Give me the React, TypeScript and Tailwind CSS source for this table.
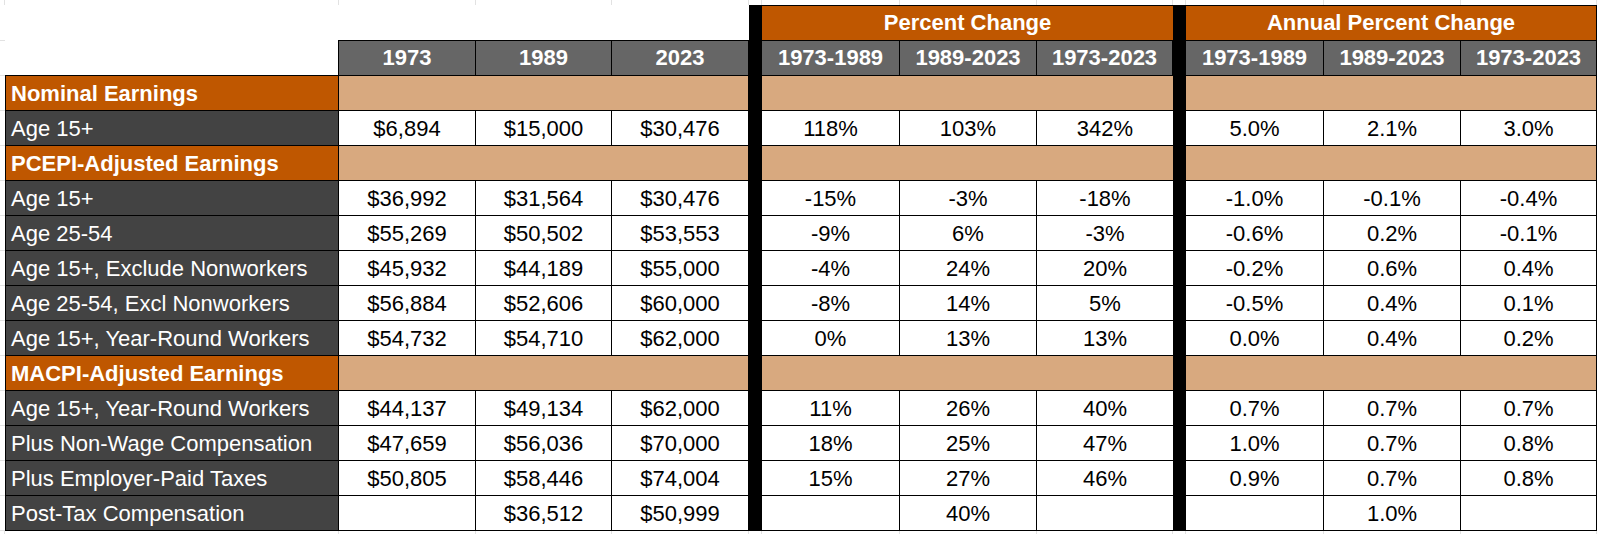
import React from "react";

type Row =
  | { kind: "section"; label: string }
  | { kind: "data"; label: string; vals: string[] };

const rows: Row[] = [
  { kind: "section", label: "Nominal Earnings" },
  { kind: "data", label: "Age 15+", vals: ["$6,894", "$15,000", "$30,476", "118%", "103%", "342%", "5.0%", "2.1%", "3.0%"] },
  { kind: "section", label: "PCEPI-Adjusted Earnings" },
  { kind: "data", label: "Age 15+", vals: ["$36,992", "$31,564", "$30,476", "-15%", "-3%", "-18%", "-1.0%", "-0.1%", "-0.4%"] },
  { kind: "data", label: "Age 25-54", vals: ["$55,269", "$50,502", "$53,553", "-9%", "6%", "-3%", "-0.6%", "0.2%", "-0.1%"] },
  { kind: "data", label: "Age 15+, Exclude Nonworkers", vals: ["$45,932", "$44,189", "$55,000", "-4%", "24%", "20%", "-0.2%", "0.6%", "0.4%"] },
  { kind: "data", label: "Age 25-54, Excl Nonworkers", vals: ["$56,884", "$52,606", "$60,000", "-8%", "14%", "5%", "-0.5%", "0.4%", "0.1%"] },
  { kind: "data", label: "Age 15+, Year-Round Workers", vals: ["$54,732", "$54,710", "$62,000", "0%", "13%", "13%", "0.0%", "0.4%", "0.2%"] },
  { kind: "section", label: "MACPI-Adjusted Earnings" },
  { kind: "data", label: "Age 15+, Year-Round Workers", vals: ["$44,137", "$49,134", "$62,000", "11%", "26%", "40%", "0.7%", "0.7%", "0.7%"] },
  { kind: "data", label: "Plus Non-Wage Compensation", vals: ["$47,659", "$56,036", "$70,000", "18%", "25%", "47%", "1.0%", "0.7%", "0.8%"] },
  { kind: "data", label: "Plus Employer-Paid Taxes", vals: ["$50,805", "$58,446", "$74,004", "15%", "27%", "46%", "0.9%", "0.7%", "0.8%"] },
  { kind: "data", label: "Post-Tax Compensation", vals: ["", "$36,512", "$50,999", "", "40%", "", "", "1.0%", ""] },
];

const years = ["1973", "1989", "2023"];
const spans = ["1973-1989", "1989-2023", "1973-2023"];

function MarginRow({ k }: { k: string }) {
  const cells = [];
  for (let i = 0; i < 14; i++) {
    cells.push(
      <div
        key={`${k}-${i}`}
        className={i < 13 ? "border-r border-[#e2e2e2]" : ""}
      />
    );
  }
  return <>{cells}</>;
}

export default function App() {
  const cells: React.ReactNode[] = [];

  cells.push(<MarginRow key="top" k="top" />);

  cells.push(<div key="r1-m" />);
  cells.push(<div key="r1-blank" className="col-span-4 bg-white" />);
  cells.push(
    <div
      key="r1-pc"
      className="col-span-3 bg-[#bf5700] border-t border-black text-white font-bold flex items-center justify-center"
    >
      Percent Change
    </div>
  );
  cells.push(
    <div
      key="r1-apc"
      className="col-span-3 bg-[#bf5700] border-t border-r border-black text-white font-bold flex items-center justify-center"
    >
      Annual Percent Change
    </div>
  );
  cells.push(<div key="r1-rm" />);

  cells.push(<div key="r2-m" className="border-t border-b border-[#e2e2e2]" />);
  cells.push(<div key="r2-l" className="border-r border-b border-black bg-white" />);
  years.forEach((y) =>
    cells.push(
      <div
        key={`r2-y-${y}`}
        className="bg-[#666666] border-t border-r border-b border-black text-white font-bold flex items-center justify-center"
      >
        {y}
      </div>
    )
  );
  spans.forEach((s) =>
    cells.push(
      <div
        key={`r2-p-${s}`}
        className="bg-[#666666] border-t border-r border-b border-black text-white font-bold flex items-center justify-center"
      >
        {s}
      </div>
    )
  );
  spans.forEach((s) =>
    cells.push(
      <div
        key={`r2-a-${s}`}
        className="bg-[#666666] border-t border-r border-b border-black text-white font-bold flex items-center justify-center"
      >
        {s}
      </div>
    )
  );
  cells.push(<div key="r2-rm" />);

  rows.forEach((r, ri) => {
    cells.push(<div key={`d${ri}-m`} className="border-b border-[#e2e2e2]" />);
    if (r.kind === "section") {
      cells.push(
        <div
          key={`d${ri}-l`}
          className="bg-[#bf5700] border-l border-r border-b border-black text-white font-bold flex items-center pl-[5px] pt-[2px] whitespace-nowrap"
        >
          {r.label}
        </div>
      );
      cells.push(<div key={`d${ri}-t1`} className="col-span-3 bg-[#d8a97f] border-r border-b border-black" />);
      cells.push(<div key={`d${ri}-t2`} className="col-span-3 bg-[#d8a97f] border-b border-black" />);
      cells.push(<div key={`d${ri}-t3`} className="col-span-3 bg-[#d8a97f] border-r border-b border-black" />);
    } else {
      cells.push(
        <div
          key={`d${ri}-l`}
          className="bg-[#434343] border-l border-r border-b border-black text-white flex items-center pl-[5px] pt-[2px] whitespace-nowrap"
        >
          {r.label}
        </div>
      );
      r.vals.forEach((v, vi) =>
        cells.push(
          <div
            key={`d${ri}-v${vi}`}
            className={`bg-white border-b border-black text-black flex items-center justify-center pt-[2px] ${
              vi === 5 ? "" : "border-r"
            }`}
          >
            {v}
          </div>
        )
      );
    }
    cells.push(<div key={`d${ri}-rm`} />);
  });

  cells.push(<MarginRow key="bot" k="bot" />);

  return (
    <div className="w-[1600px] h-[534px] bg-white overflow-hidden font-['Liberation_Sans',Arial,sans-serif] text-[22px] leading-none">
      <div className="grid grid-cols-[5px_334px_137px_136px_137px_13px_138px_137px_136px_13px_138px_137px_136px_3px] grid-rows-[5px_35px_36px_repeat(13,35px)_3px]">
        <div className="[grid-area:2/6/17/7] bg-black" />
        <div className="[grid-area:2/10/17/11] bg-black" />
        {cells}
      </div>
    </div>
  );
}
